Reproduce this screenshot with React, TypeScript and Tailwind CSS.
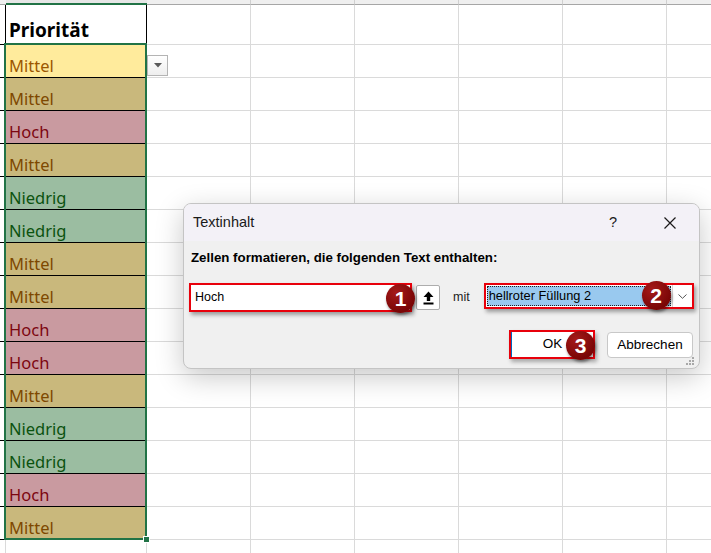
import React from "react";

type Kind = "Mittel" | "Hoch" | "Niedrig";

const data: Kind[] = [
  "Mittel", "Mittel", "Hoch", "Mittel", "Niedrig", "Niedrig", "Mittel", "Mittel",
  "Hoch", "Hoch", "Mittel", "Niedrig", "Niedrig", "Hoch", "Mittel",
];

const kindCls: Record<Kind, string> = {
  Mittel: "bg-[#c9b87c] text-[#7e4800]",
  Hoch: "bg-[#c99aa0] text-[#7d0610]",
  Niedrig: "bg-[#9bbda1] text-[#0b520f]",
};

function GrayCells() {
  return (
    <>
      <div className="w-[104px] shrink-0 border-r border-b border-[#dadada]" />
      <div className="w-[104px] shrink-0 border-r border-b border-[#dadada]" />
      <div className="w-[104px] shrink-0 border-r border-b border-[#dadada]" />
      <div className="w-[104px] shrink-0 border-r border-b border-[#dadada]" />
      <div className="w-[104px] shrink-0 border-r border-b border-[#dadada]" />
      <div className="flex-1 border-b border-[#dadada]" />
    </>
  );
}

function Badge({ n, cls }: { n: string; cls: string }) {
  return (
    <div
      className={`absolute ${cls} w-[29px] h-[29px] rounded-full bg-[radial-gradient(circle_at_35%_30%,#a51a1a,#7a0606_70%)] shadow-[1px_2px_3px_rgba(0,0,0,0.45)] flex items-center justify-center text-white font-bold text-[21px] leading-none font-['Liberation_Sans',Arial,sans-serif]`}
    >
      {n}
    </div>
  );
}

export default function App() {
  return (
    <div className="relative w-[711px] h-[553px] overflow-hidden bg-white font-['Noto_Sans',sans-serif]">
      {/* column header strip */}
      <div className="flex h-[5px]">
        <div className="w-[6px] shrink-0 bg-[#efefef] border-b border-[#a6a6a6]" />
        <div className="w-[141px] shrink-0 bg-[#e6e6e6] border-b-2 border-[#217346]" />
        <div className="w-[104px] shrink-0 bg-[#efefef] border-r border-r-[#d0d0d0] border-b border-b-[#a6a6a6]" />
        <div className="w-[104px] shrink-0 bg-[#efefef] border-r border-r-[#d0d0d0] border-b border-b-[#a6a6a6]" />
        <div className="w-[104px] shrink-0 bg-[#efefef] border-r border-r-[#d0d0d0] border-b border-b-[#a6a6a6]" />
        <div className="w-[104px] shrink-0 bg-[#efefef] border-r border-r-[#d0d0d0] border-b border-b-[#a6a6a6]" />
        <div className="w-[104px] shrink-0 bg-[#efefef] border-r border-r-[#d0d0d0] border-b border-b-[#a6a6a6]" />
        <div className="flex-1 bg-[#efefef] border-b border-[#a6a6a6]" />
      </div>

      {/* header row */}
      <div className="flex h-[40px]">
        <div className="w-[6px] shrink-0 border-r border-b border-black" />
        <div className="w-[141px] shrink-0 border-r border-b border-black flex items-end pl-[3px] pb-[4px] text-[19px] leading-none font-bold text-black">
          Priorität
        </div>
        <GrayCells />
      </div>

      {/* data rows */}
      {data.map((k, i) => (
        <div key={i} className="flex h-[33px]">
          <div className="w-[6px] shrink-0 border-r border-b border-black" />
          <div
            className={`w-[141px] shrink-0 border-r border-b border-black flex items-end pl-[3px] pb-[3px] text-[16.5px] leading-none ${
              i === 0 ? "bg-[#ffeb9c] text-[#9c5700]" : kindCls[k]
            }`}
          >
            {k}
          </div>
          <GrayCells />
        </div>
      ))}
      <div className="flex h-[40px]">
        <div className="w-[6px] shrink-0 border-r border-[#dadada]" />
        <div className="w-[141px] shrink-0 border-r border-[#dadada]" />
        <div className="w-[104px] shrink-0 border-r border-[#dadada]" />
        <div className="w-[104px] shrink-0 border-r border-[#dadada]" />
        <div className="w-[104px] shrink-0 border-r border-[#dadada]" />
        <div className="w-[104px] shrink-0 border-r border-[#dadada]" />
        <div className="w-[104px] shrink-0 border-r border-[#dadada]" />
      </div>

      {/* selection */}
      <div className="absolute left-[4px] top-[43px] w-[143px] h-[497px] border-2 border-[#217346] pointer-events-none" />
      <div className="absolute left-[144px] top-[537px] w-[5px] h-[5px] bg-[#217346] outline outline-1 outline-white" />

      {/* dropdown arrow in cell */}
      <div className="absolute left-[147px] top-[55px] w-[21px] h-[21px] border border-[#b4b4b4] bg-gradient-to-b from-white to-[#eeeeee] flex items-center justify-center">
        <svg width="8" height="5" viewBox="0 0 8 5">
          <path d="M0 0 H8 L4 4.5 Z" fill="#5a5a5a" />
        </svg>
      </div>

      {/* dialog */}
      <div className="absolute left-[183px] top-[203px] w-[517px] h-[166px] rounded-[8px] border border-[#c4c4c4] bg-[#f0f0f0] shadow-[0_8px_28px_rgba(0,0,0,0.22)] overflow-hidden font-['Liberation_Sans',Arial,sans-serif] text-[#1a1a1a]">
        <div className="flex items-center h-[37px] bg-[#f3f1f7] pl-[9px] pr-[19px]">
          <div className="flex-1 text-[14.5px]">Textinhalt</div>
          <div className="w-[20px] text-center text-[14.5px]">?</div>
          <div className="w-[20px] ml-[37px] flex items-center justify-center">
            <svg width="14" height="14" viewBox="0 0 14 14">
              <path d="M1.5 1.5 L12.5 12.5 M12.5 1.5 L1.5 12.5" stroke="#1a1a1a" strokeWidth="1.2" />
            </svg>
          </div>
        </div>

        <div className="px-[5px]">
          <div className="mt-[7px] pl-[2px] leading-[20px] text-[13.3px] font-bold text-black">
            Zellen formatieren, die folgenden Text enthalten:
          </div>

          <div className="mt-[15px] flex items-start">
            <div className="relative w-[223px] h-[29px] border-2 border-[#e8000b] bg-white shadow-[2px_3px_4px_rgba(0,0,0,0.35)] flex items-center pl-[4px] text-[12.5px] text-black">
              Hoch
              <Badge n="1" cls="left-[195px] top-[-1px]" />
            </div>
            <div className="ml-[4px] mt-[2px] w-[24px] h-[25px] rounded-[2px] border border-[#adadad] bg-white flex items-center justify-center">
              <svg width="11" height="14" viewBox="0 0 11 14">
                <path d="M5.5 0.5 L10.5 6 H7.2 V10 H3.8 V6 H0.5 Z" fill="#000" />
                <rect x="0.5" y="11.5" width="10" height="2" fill="#000" />
              </svg>
            </div>
            <div className="ml-[13px] h-[29px] flex items-center text-[12.5px] text-[#222]">mit</div>
            <div className="relative ml-[14px] w-[210px] h-[26px] border-2 border-[#e8000b] bg-white shadow-[2px_3px_4px_rgba(0,0,0,0.35)] flex">
              <div className="flex-1 m-[1px] bg-[#99c9ef] border border-dotted border-[#222] flex items-center pl-[1px] text-[12.8px] text-black">
                hellroter Füllung 2
              </div>
              <div className="w-[20px] bg-white border-l border-[#d6d6d6] flex items-center justify-center">
                <svg width="9" height="5" viewBox="0 0 9 5">
                  <path d="M0.5 0.5 L4.5 4.3 L8.5 0.5" fill="none" stroke="#555" strokeWidth="1" />
                </svg>
              </div>
              <Badge n="2" cls="left-[156px] top-[-4px]" />
            </div>
          </div>

          <div className="mt-[18px] flex justify-end items-start pr-[1px]">
            <div className="relative w-[86px] h-[29px] border-2 border-[#e8000b] bg-white shadow-[2px_3px_4px_rgba(0,0,0,0.3)] flex">
              <div className="w-[1px] bg-[#0067c0]" />
              <div className="flex-1 flex items-center justify-center text-[13.5px] text-black">OK</div>
              <Badge n="3" cls="left-[55px] top-[-1px]" />
            </div>
            <div className="ml-[12px] mt-[2px] w-[86px] h-[26px] rounded-[4px] border border-[#c8c8c8] bg-white flex items-center justify-center text-[13.5px] text-black">
              Abbrechen
            </div>
          </div>
        </div>

        <svg className="absolute right-[5px] bottom-[3px]" width="8" height="8" viewBox="0 0 8 8">
          <rect x="6" y="0" width="2" height="2" fill="#a8a8a8" />
          <rect x="3" y="3" width="2" height="2" fill="#a8a8a8" />
          <rect x="6" y="3" width="2" height="2" fill="#a8a8a8" />
          <rect x="0" y="6" width="2" height="2" fill="#a8a8a8" />
          <rect x="3" y="6" width="2" height="2" fill="#a8a8a8" />
          <rect x="6" y="6" width="2" height="2" fill="#a8a8a8" />
        </svg>
      </div>
    </div>
  );
}
